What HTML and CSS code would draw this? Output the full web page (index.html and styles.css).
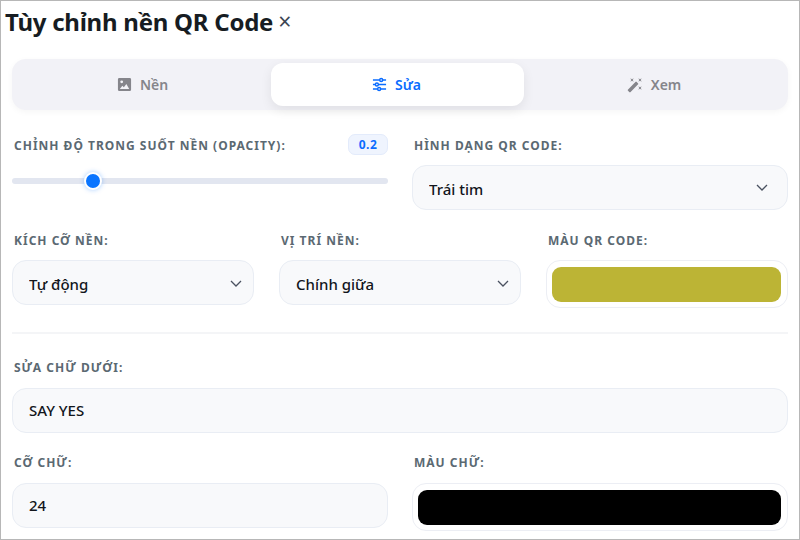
FILE: index.html
```html
<!DOCTYPE html>
<html lang="vi">

<head>
    <meta charset="UTF-8">
    <meta name="viewport" content="width=device-width, initial-scale=1.0">
    <title>Tùy chỉnh nền QR Code</title>
    <link rel="stylesheet" href="styles.css">
</head>

<body>

    <div class="modal">
        <div class="modal-header">
            <h2>Tùy chỉnh nền QR Code</h2>
            <button class="close-btn" type="button">×</button>
        </div>

        <div class="tabs">
            <button class="tab" type="button">
                <svg width="15" height="15" viewBox="0 0 16 16">
                    <path fill-rule="evenodd" d="M2.5 1h11A1.5 1.5 0 0 1 15 2.5v11a1.5 1.5 0 0 1-1.5 1.5h-11A1.5 1.5 0 0 1 1 13.500v-11A1.500 1.500 0 0 1 2.500 1zM5 3.600a1.500 1.500 0 1 0 0 3 1.500 1.500 0 0 0 0-3zM3 12.700h10L10 7.400 7.300 11 5.700 9.300z" fill="currentColor" />
                </svg>
                Nền
            </button>
            <button class="tab active" type="button">
                <svg width="15" height="15" viewBox="0 0 16 16" fill="none" stroke="currentColor" stroke-width="1.500">
                    <path d="M1 3.200h7.200M11.400 3.200H15M1 8h2.600M6.800 8H15M1 12.800h5M9.200 12.800H15" />
                    <circle cx="9.800" cy="3.200" r="1.600" />
                    <circle cx="5.200" cy="8" r="1.600" />
                    <circle cx="7.600" cy="12.800" r="1.600" />
                </svg>
                Sửa
            </button>
            <button class="tab" type="button">
                <svg width="16" height="16" viewBox="0 0 24 24">
                    <path d="M7.500 5.600L10 7 8.600 4.500 10 2 7.500 3.400 5 2l1.400 2.500L5 7zm12 9.800L17 14l1.400 2.500L17 19l2.500-1.400L22 19l-1.400-2.500L22 14zM22 2l-2.500 1.400L17 2l1.400 2.500L17 7l2.500-1.400L22 7l-1.400-2.500zm-7.630 5.290c-.39-.39-1.020-.39-1.410 0L1.290 18.960c-.39.39-.39 1.020 0 1.410l2.340 2.340c.39.39 1.020.39 1.410 0L16.700 11.050c.39-.39.39-1.020 0-1.410z" fill="currentColor" />
                </svg>
                Xem
            </button>
        </div>

        <div class="row row-top">
            <div class="form-group">
                <div class="label-line">
                    <label for="opacity">Chỉnh độ trong suốt nền (Opacity):</label>
                    <span class="badge">0.2</span>
                </div>
                <input class="slider" type="range" id="opacity" min="0" max="1" step="0.1" value="0.2">
            </div>
            <div class="form-group shape-group">
                <label for="shape">Hình dạng QR Code:</label>
                <div class="select-wrap">
                    <select id="shape">
                        <option>Trái tim</option>
                    </select>
                    <svg class="chevron" width="12" height="7" viewBox="0 0 12 7"><path d="M1 1l5 5 5-5" /></svg>
                </div>
            </div>
        </div>

        <div class="row row-three">
            <div class="form-group">
                <label for="size">Kích cỡ nền:</label>
                <div class="select-wrap">
                    <select id="size">
                        <option>Tự động</option>
                    </select>
                    <svg class="chevron" width="12" height="7" viewBox="0 0 12 7"><path d="M1 1l5 5 5-5" /></svg>
                </div>
            </div>
            <div class="form-group">
                <label for="position">Vị trí nền:</label>
                <div class="select-wrap">
                    <select id="position">
                        <option>Chính giữa</option>
                    </select>
                    <svg class="chevron" width="12" height="7" viewBox="0 0 12 7"><path d="M1 1l5 5 5-5" /></svg>
                </div>
            </div>
            <div class="form-group">
                <label for="qrColor">Màu QR Code:</label>
                <input class="color-input" type="color" id="qrColor" value="#bcb435">
            </div>
        </div>

        <hr class="divider">

        <div class="form-group text-group">
            <label for="caption">Sửa chữ dưới:</label>
            <input class="text-input" type="text" id="caption" value="SAY YES">
        </div>

        <div class="row last-row">
            <div class="form-group">
                <label for="fontSize">Cỡ chữ:</label>
                <input class="text-input" type="text" id="fontSize" value="24">
            </div>
            <div class="form-group">
                <label for="textColor">Màu chữ:</label>
                <input class="color-input" type="color" id="textColor" value="#000000">
            </div>
        </div>
    </div>

</body>

</html>
```

FILE: styles.css
```css
* {
    box-sizing: border-box;
}

html,
body {
    margin: 0;
    padding: 0;
    height: 100%;
    overflow: hidden;
}

body {
    font-family: "Noto Sans", Arial, sans-serif;
    background-color: #ffffff;
}

.modal {
    width: 800px;
    height: 540px;
    padding: 0 11px;
    border: 1px solid #b7b7b7;
    overflow: hidden;
}

.modal-header {
    display: flex;
    align-items: center;
    height: 40px;
    margin-left: -7px;
    gap: 5px;
}

.modal-header h2 {
    margin: 0;
    font-size: 24px;
    font-weight: 700;
    letter-spacing: -0.25px;
    color: #161c22;
}

.close-btn {
    padding: 0;
    border: none;
    background: none;
    font-family: inherit;
    font-size: 23px;
    line-height: 1;
    color: #3d4653;
}

.tabs {
    display: grid;
    grid-template-columns: 259px 253px 260px;
    height: 51px;
    margin-top: 18px;
    padding: 4px 4px 4px 0;
    background-color: #f2f2f7;
    border-radius: 14px;
    box-shadow: 0 2px 6px rgba(0, 0, 0, 0.04);
}

.tab {
    display: flex;
    align-items: center;
    justify-content: center;
    gap: 8px;
    padding: 0 0 0 2px;
    border: none;
    background: none;
    border-radius: 12px;
    font-family: inherit;
    font-size: 14px;
    font-weight: 600;
    color: #85858b;
}

.tab.active {
    padding: 0 2px 0 0;
    background-color: #ffffff;
    color: #0a6cff;
    box-shadow: 0 4px 12px rgba(0, 0, 0, 0.08);
}

.tab:last-child {
    padding: 0;
}

.row {
    display: grid;
    grid-template-columns: 1fr 1fr;
    gap: 24px;
}

.row-top {
    margin-top: 24px;
}

.row-three {
    grid-template-columns: 1fr 1fr 1fr;
    gap: 25px;
    margin-top: 22px;
}

.form-group label {
    display: block;
    margin: 0 0 10px 2px;
    font-size: 12px;
    line-height: 18px;
    font-weight: 700;
    letter-spacing: 1px;
    text-transform: uppercase;
    color: #5b6972;
}

.shape-group {
    padding-top: 3px;
}

.label-line {
    display: flex;
    justify-content: space-between;
    align-items: center;
    height: 21px;
}

.form-group .label-line label {
    margin-bottom: 0;
    padding-top: 2px;
}

.badge {
    width: 40px;
    height: 21px;
    border: 1px solid #e3ebfb;
    border-radius: 7px;
    background-color: #eff4fe;
    font-size: 12px;
    line-height: 19px;
    font-weight: 700;
    letter-spacing: 0.5px;
    text-align: center;
    color: #0a6cff;
}

.slider {
    display: block;
    width: 100%;
    height: 18px;
    margin: 17px 0 0;
    appearance: none;
    -webkit-appearance: none;
    background: none;
}

.slider::-webkit-slider-runnable-track {
    height: 6px;
    border-radius: 3px;
    background-color: #e2e6f0;
}

.slider::-webkit-slider-thumb {
    -webkit-appearance: none;
    width: 18px;
    height: 18px;
    margin-top: -6px;
    border: 2px solid #ffffff;
    border-radius: 50%;
    background-color: #0a75ff;
    box-shadow: 0 0 5px rgba(10, 117, 255, 0.35);
}

.select-wrap {
    position: relative;
}

select,
.text-input {
    display: block;
    width: 100%;
    height: 45px;
    padding: 0 16px;
    border: 1px solid #e9edf4;
    border-radius: 14px;
    background-color: #f8f9fb;
    font-family: inherit;
    font-size: 15px;
    font-weight: 500;
    color: #12161c;
    outline: none;
}

select {
    padding-top: 2px;
    appearance: none;
    -webkit-appearance: none;
}

.text-input {
    padding-bottom: 2px;
}

.chevron {
    position: absolute;
    top: 19px;
    right: 20px;
    fill: none;
    stroke: #4a5160;
    stroke-width: 1.300;
}

.row-three .chevron {
    top: 20px;
    right: 12px;
}

.color-input {
    display: block;
    width: 100%;
    height: 48px;
    padding: 6px 6px 5px 5px;
    border: 1px solid #eceef4;
    border-radius: 14px;
    background-color: #ffffff;
    appearance: none;
    -webkit-appearance: none;
}

.color-input::-webkit-color-swatch-wrapper {
    padding: 0;
}

.color-input::-webkit-color-swatch {
    border: none;
    border-radius: 9px;
}

.divider {
    height: 2px;
    margin: 24px 0 0;
    border: none;
    background-color: #f4f5f7;
}

.text-group {
    margin-top: 25px;
}

.text-group label,
.last-row label {
    margin-bottom: 11px;
}

.last-row {
    margin-top: 21px;
}
```
